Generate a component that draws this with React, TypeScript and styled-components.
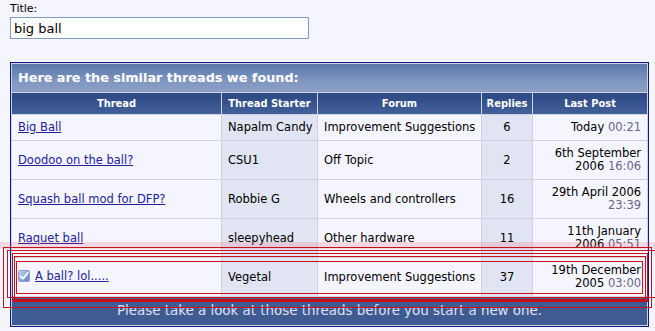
import React from "react";
import styled, { createGlobalStyle } from "styled-components";

const Global = createGlobalStyle`
  html, body { margin: 0; padding: 0; background: #f5f5ff; }
  body { font-family: "DejaVu Sans", Verdana, sans-serif; font-size: 11px; color: #000; }
`;

const Page = styled.div`
  position: relative;
  width: 655px;
  height: 331px;
  overflow: hidden;
  padding: 2px 10px 0 10px;
  box-sizing: border-box;
`;

const Label = styled.div`
  font-size: 11px;
  line-height: 14px;
  color: #000;
`;

const TitleInput = styled.input`
  display: block;
  box-sizing: border-box;
  width: 299px;
  height: 22px;
  margin: 1px 0 0 0;
  padding: 1px 3px;
  border: 1px solid #7f9db9;
  background: #fff;
  font-family: "DejaVu Sans", Verdana, sans-serif;
  font-size: 13px;
  color: #000;
  outline: none;
`;

const Table = styled.table`
  margin-top: 23px;
  width: 639px;
  table-layout: fixed;
  border-collapse: separate;
  border-spacing: 1px;
  background: #d1d1e1;
  border: 1px solid #0b198c;
`;

const Col = styled.col<{ $w: number }>`
  width: ${(p) => p.$w}px;
`;

const Cat = styled.td`
  background: linear-gradient(#5876aa, #7f96c0 60%, #8ba0c6);
  color: #fff;
  font-weight: bold;
  font-size: 12.8px;
  line-height: 16px;
  padding: 6px 6px;
  text-align: left;
`;

const Head = styled.th`
  background: linear-gradient(#2c4882, #42609a);
  color: #fff;
  font-family: "DejaVu Sans Condensed", "DejaVu Sans", sans-serif;
  font-weight: bold;
  font-size: 11px;
  line-height: 13px;
  padding: 4px 1px;
  text-align: center;
  white-space: nowrap;
  overflow: hidden;
`;

const Cell = styled.td<{ $alt?: boolean; $align?: string }>`
  background: ${(p) => (p.$alt ? "#e1e4f2" : "#f5f5ff")};
  padding: 6px 6px;
  line-height: 13px;
  font-size: 11.5px;
  text-align: ${(p) => p.$align || "left"};
  vertical-align: middle;
  white-space: nowrap;
  overflow: hidden;
`;

const Link = styled.a`
  color: #22229c;
  text-decoration: underline;
`;

const Time = styled.span`
  color: #666686;
`;

const Foot = styled.td`
  background: #3e5c92;
  color: #e0e0f6;
  text-align: center;
  font-size: 13.4px;
  line-height: 16px;
  padding: 6px 6px;
`;

const IconWrap = styled.span`
  display: inline-block;
  vertical-align: -2px;
  margin-right: 5px;
`;

const Mark = styled.div<{ $l: number; $t: number; $w: number; $h: number; $thick?: boolean }>`
  position: absolute;
  left: ${(p) => p.$l}px;
  top: ${(p) => p.$t}px;
  width: ${(p) => p.$w}px;
  height: ${(p) => p.$h}px;
  box-sizing: border-box;
  border: 1px solid #c8101a;
  ${(p) => (p.$thick ? "border-bottom-width: 2px;" : "")}
  pointer-events: none;
`;

const Band = styled.div`
  position: absolute;
  left: 0;
  top: 242px;
  width: 655px;
  height: 7px;
  background: rgba(235, 70, 80, 0.16);
  pointer-events: none;
`;

const CheckIcon = () => (
  <svg width="12" height="12" viewBox="0 0 12 12">
    <defs>
      <linearGradient id="cb" x1="0" y1="0" x2="1" y2="1">
        <stop offset="0" stopColor="#c8d8f4" />
        <stop offset="1" stopColor="#5f7fc4" />
      </linearGradient>
    </defs>
    <rect x="0.5" y="0.5" width="11" height="11" rx="1" fill="url(#cb)" stroke="#8aa0cc" />
    <path d="M2.5 6.2 L5 8.6 L9.8 2.8" fill="none" stroke="#fff" strokeWidth="1.8" strokeLinecap="round" strokeLinejoin="round" />
  </svg>
);

type Row = {
  title: string;
  starter: string;
  forum: string;
  replies: string;
  top?: string;
  date: string;
  time: string;
  icon?: boolean;
};

const rows: Row[] = [
  { title: "Big Ball", starter: "Napalm Candy", forum: "Improvement Suggestions", replies: "6", date: "Today", time: "00:21" },
  { title: "Doodoo on the ball?", starter: "CSU1", forum: "Off Topic", replies: "2", top: "6th September", date: "2006", time: "16:06" },
  { title: "Squash ball mod for DFP?", starter: "Robbie G", forum: "Wheels and controllers", replies: "16", top: "29th April 2006", date: "", time: "23:39" },
  { title: "Raquet ball", starter: "sleepyhead", forum: "Other hardware", replies: "11", top: "11th January", date: "2006", time: "05:51" },
  { title: "A ball? lol.....", starter: "Vegetal", forum: "Improvement Suggestions", replies: "37", top: "19th December", date: "2005", time: "03:00", icon: true },
];

export default function App() {
  return (
    <>
      <Global />
      <Page>
        <Label>Title:</Label>
        <TitleInput defaultValue="big ball" />
        <Table>
          <colgroup>
            <Col $w={209} />
            <Col $w={95} />
            <Col $w={163} />
            <Col $w={50} />
            <Col $w={114} />
          </colgroup>
          <tbody>
            <tr>
              <Cat colSpan={5}>Here are the similar threads we found:</Cat>
            </tr>
            <tr>
              <Head>Thread</Head>
              <Head>Thread Starter</Head>
              <Head>Forum</Head>
              <Head>Replies</Head>
              <Head>Last Post</Head>
            </tr>
            {rows.map((r) => (
              <tr key={r.title}>
                <Cell>
                  {r.icon && (
                    <IconWrap>
                      <CheckIcon />
                    </IconWrap>
                  )}
                  <Link href="#">{r.title}</Link>
                </Cell>
                <Cell $alt>{r.starter}</Cell>
                <Cell>{r.forum}</Cell>
                <Cell $alt $align="center">{r.replies}</Cell>
                <Cell $align="right">
                  {r.top && (
                    <>
                      {r.top}
                      <br />
                    </>
                  )}
                  {r.date}
                  {r.date ? " " : ""}
                  <Time>{r.time}</Time>
                </Cell>
              </tr>
            ))}
            <tr>
              <Foot colSpan={5}>Please take a look at those threads before you start a new one.</Foot>
            </tr>
          </tbody>
        </Table>
        <Band />
        <Mark $l={3} $t={247} $w={649} $h={61} />
        <Mark $l={7} $t={250} $w={660} $h={48} />
        <Mark $l={12} $t={253} $w={636} $h={49} $thick />
        <Mark $l={14} $t={256} $w={632} $h={44} />
        <Mark $l={16} $t={261} $w={627} $h={33} />
      </Page>
    </>
  );
}
